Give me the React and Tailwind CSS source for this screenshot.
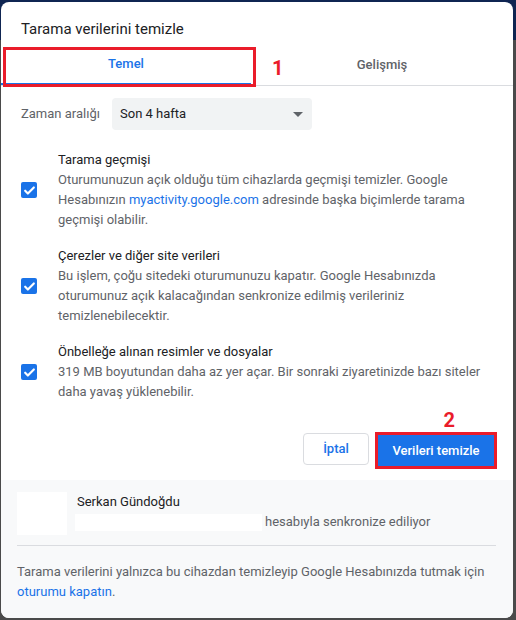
const rows = [
  {
    title: 'Tarama geçmişi',
    body: (
      <>
        Oturumunuzun açık olduğu tüm cihazlarda geçmişi temizler. Google Hesabınızın{' '}
        <span className="text-[#1a73e8]">myactivity.google.com</span> adresinde başka biçimlerde tarama geçmişi
        olabilir.
      </>
    ),
  },
  {
    title: 'Çerezler ve diğer site verileri',
    body: 'Bu işlem, çoğu sitedeki oturumunuzu kapatır. Google Hesabınızda oturumunuz açık kalacağından senkronize edilmiş verileriniz temizlenebilecektir.',
  },
  {
    title: 'Önbelleğe alınan resimler ve dosyalar',
    body: '319 MB boyutundan daha az yer açar. Bir sonraki ziyaretinizde bazı siteler daha yavaş yüklenebilir.',
  },
]

function Check() {
  return (
    <div className="w-4 h-4 rounded-[2px] bg-[#1a73e8] flex items-center justify-center shrink-0">
      <svg width="13" height="13" viewBox="0 0 24 24" fill="none">
        <path d="M4 12.5l5 5L20 6.5" stroke="white" strokeWidth="4" strokeLinecap="round" strokeLinejoin="round" />
      </svg>
    </div>
  )
}

export default function App() {
  return (
    <div className="w-[516px] h-[620px] bg-[#4a4a4a] pt-[2px] pl-px font-['Roboto',sans-serif] relative overflow-hidden">
      <div className="absolute top-0 left-0 right-0 h-[40px] bg-[#0f2552]" />
      <div className="relative w-[512px] h-[616px] bg-white rounded-[8px] overflow-hidden flex flex-col">
        <div className="text-[15px] text-[#202124] pl-[20px] pt-[17px] h-[43px] leading-[20px]">Tarama verilerini temizle</div>

        <div className="relative flex border-b border-[#dadce0] h-[41px]">
          <div className="w-[250px] flex items-center justify-center text-[13px] font-medium text-[#1a73e8] border-b-2 border-[#1a73e8]">
            Temel
          </div>
          <div className="flex-1 flex items-center justify-center text-[13px] font-medium text-[#5f6368]">Gelişmiş</div>
          <div className="absolute left-[2px] top-[2px] w-[253px] h-[40px] border-[3px] border-[#ea1c2a]" />
          <div className="absolute left-[271px] top-[11px] text-[20px] font-bold text-[#ea1c2a] leading-[24px]">1</div>
        </div>

        <div className="flex items-center pl-[20px] mt-[12px]">
          <span className="text-[13px] text-[#5f6368] w-[91px]">Zaman aralığı</span>
          <div className="w-[200px] h-[32px] bg-[#f1f3f4] rounded-[4px] flex items-center justify-between pl-[8px] pr-[9px]">
            <span className="text-[13px] text-[#202124]">Son 4 hafta</span>
            <svg width="10" height="5" viewBox="0 0 10 5">
              <path d="M0 0h10L5 5z" fill="#5f6368" />
            </svg>
          </div>
        </div>

        <div className="flex flex-col gap-[16px] mt-[20px] pr-[20px]">
          {rows.map((r) => (
            <div key={r.title} className="flex items-center">
              <div className="w-[57px] pl-[20px]">
                <Check />
              </div>
              <div className="flex-1 text-[13px] leading-[20px]">
                <div className="text-[#202124]">{r.title}</div>
                <div className="text-[#5f6368]">{r.body}</div>
              </div>
            </div>
          ))}
        </div>

        <div className="relative flex justify-end gap-[6px] pr-[16px] mt-[30px] h-[48px]">
          <div className="absolute right-[58px] top-[-24px] text-[20px] font-bold text-[#ea1c2a] leading-[24px]">2</div>
          <button className="w-[66px] h-[32px] mt-[1px] border border-[#dadce0] rounded-[4px] text-[13px] font-medium text-[#1a73e8] bg-white">
            İptal
          </button>
          <div className="border-[3px] border-[#ea1c2a] w-[122px] h-[37px] p-0 flex">
            <button className="flex-1 bg-[#1a73e8] text-white text-[13px] font-medium">Verileri temizle</button>
          </div>
        </div>

        <div className="flex-1 bg-[#f8f9fa] px-[16px] pt-[12px]">
          <div className="flex">
            <div className="w-[50px] h-[43px] bg-white" />
            <div className="ml-[10px] text-[13px] leading-[18px]">
              <div className="text-[#202124] mt-[1px]">Serkan Gündoğdu</div>
              <div className="flex items-center mt-[2px] text-[#5f6368]">
                <div className="w-[187px] h-[17px] bg-white mr-[3px] -ml-[2px]" />
                hesabıyla senkronize ediliyor
              </div>
            </div>
          </div>
          <div className="border-t border-[#dadce0] mt-[10px] mr-[1px]" />
          <div className="text-[13px] leading-[20px] text-[#5f6368] pt-[16px]">
            Tarama verilerini yalnızca bu cihazdan temizleyip Google Hesabınızda tutmak için{' '}
            <span className="text-[#1a73e8]">oturumu kapatın</span>.
          </div>
        </div>
      </div>
    </div>
  )
}
